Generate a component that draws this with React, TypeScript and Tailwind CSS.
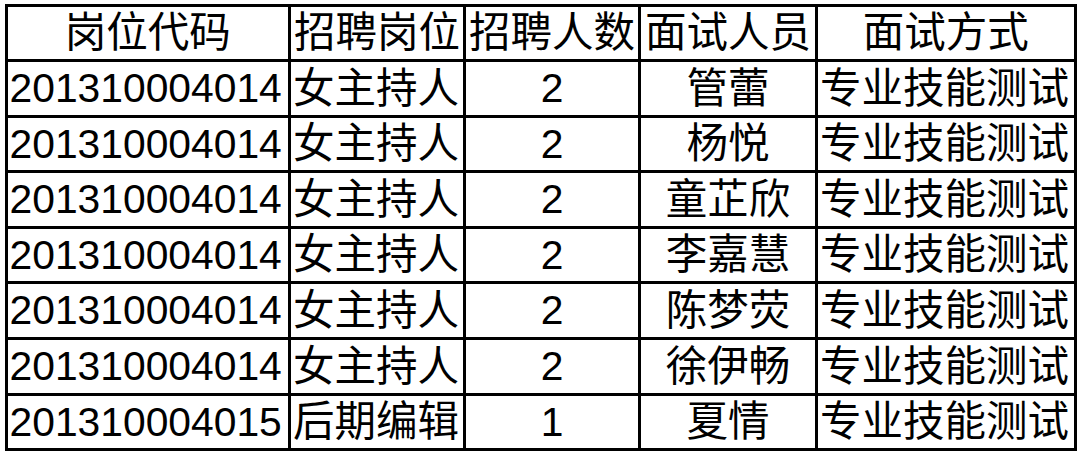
import React from "react";

const rows = [
  { code: "201310004014", post: "女主持人", count: "2", name: "管蕾" },
  { code: "201310004014", post: "女主持人", count: "2", name: "杨悦" },
  { code: "201310004014", post: "女主持人", count: "2", name: "童芷欣" },
  { code: "201310004014", post: "女主持人", count: "2", name: "李嘉慧" },
  { code: "201310004014", post: "女主持人", count: "2", name: "陈梦荧" },
  { code: "201310004014", post: "女主持人", count: "2", name: "徐伊畅" },
  { code: "201310004015", post: "后期编辑", count: "1", name: "夏情" },
];

const cell = "border-[3px] border-black p-0 align-middle whitespace-nowrap overflow-hidden";
const cjk = "text-[41.5px]";
const num = "text-[40.8px]";

export default function App() {
  return (
    <div
      className="w-[1080px] h-[453px] bg-white text-black overflow-hidden pl-[4.5px] pt-[3.5px]"
      style={{ fontFamily: '"Liberation Sans", "Noto Sans CJK SC", sans-serif' }}
    >
      <table className="border-collapse table-fixed leading-none">
        <colgroup>
          <col className="w-[283.5px]" />
          <col className="w-[175px]" />
          <col className="w-[175px]" />
          <col className="w-[177px]" />
          <col className="w-[258.5px]" />
        </colgroup>
        <thead>
          <tr className="h-[55.6px]">
            <th className={`${cell} ${cjk} font-normal text-center`}>岗位代码</th>
            <th className={`${cell} ${cjk} font-normal text-center`}>招聘岗位</th>
            <th className={`${cell} ${cjk} font-normal text-center`}>招聘人数</th>
            <th className={`${cell} ${cjk} font-normal text-center`}>面试人员</th>
            <th className={`${cell} ${cjk} font-normal text-center`}>面试方式</th>
          </tr>
        </thead>
        <tbody>
          {rows.map((r, i) => (
            <tr key={i} className="h-[55.6px]">
              <td className={`${cell} ${num} text-left pl-[2px]`}>{r.code}</td>
              <td className={`${cell} ${cjk} text-left pl-[2px]`}>{r.post}</td>
              <td className={`${cell} ${num} text-center`}>{r.count}</td>
              <td className={`${cell} ${cjk} text-center`}>{r.name}</td>
              <td className={`${cell} ${cjk} text-left pl-[2px]`}>专业技能测试</td>
            </tr>
          ))}
        </tbody>
      </table>
    </div>
  );
}
